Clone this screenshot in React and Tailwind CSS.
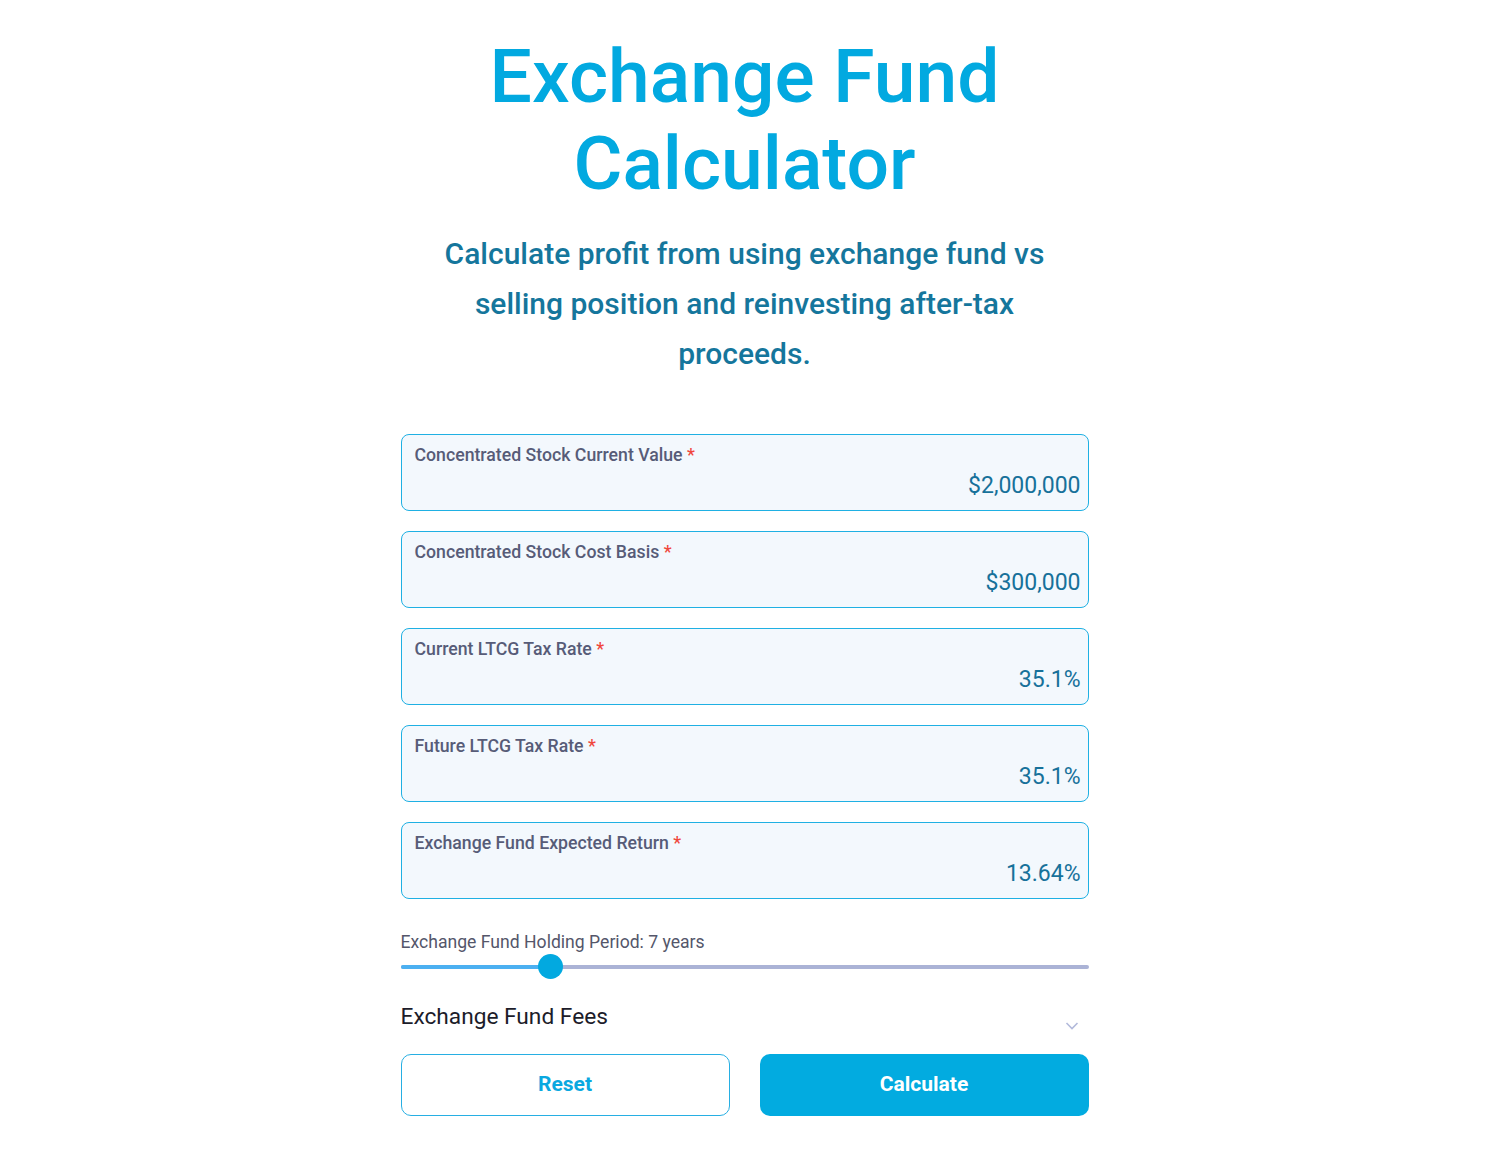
import React from "react";

const fields = [
  { label: "Concentrated Stock Current Value", value: "$2,000,000" },
  { label: "Concentrated Stock Cost Basis", value: "$300,000" },
  { label: "Current LTCG Tax Rate", value: "35.1%" },
  { label: "Future LTCG Tax Rate", value: "35.1%" },
  { label: "Exchange Fund Expected Return", value: "13.64%" },
];

function Field({ label, value }) {
  return (
    <div className="h-[77px] rounded-[8px] border border-[#1fb0e3] bg-[#f3f8fd] pl-[13px] pr-[7px] pt-[10px]">
      <div className="text-[17.7px] leading-[20px] font-medium text-[#575c78]">
        {label} <span className="text-[#f0473c]">*</span>
      </div>
      <div className="mt-[7px] text-right text-[23px] leading-[27px] text-[#17719a]">{value}</div>
    </div>
  );
}

export default function App() {
  return (
    <div className="min-h-[1165px] bg-white pr-[17px]" style={{ fontFamily: "Roboto, 'Noto Sans', sans-serif" }}>
      <div className="flex flex-col items-center pt-[33px]">
        <h1 className="text-center text-[75px] leading-[87px] font-medium text-[#02a9e0]">
          Exchange Fund
          <br />
          Calculator
        </h1>
        <p className="mt-[22px] w-[655px] text-center text-[30px] leading-[50px] font-medium text-[#15769c]">
          Calculate profit from using exchange fund vs selling position and reinvesting after-tax proceeds.
        </p>
        <div className="mt-[55px] w-[688px]">
          <div className="flex flex-col gap-[20px]">
            {fields.map((f) => (
              <Field key={f.label} {...f} />
            ))}
          </div>
          <div className="mt-[31px] text-[17.6px] leading-[24px] text-[#54566a]">
            Exchange Fund Holding Period: 7 years
          </div>
          <div className="relative mt-[0px] h-[26px]">
            <div className="absolute left-0 right-0 top-[11px] h-[4px] rounded-full bg-[#abb3d6]" />
            <div className="absolute left-0 top-[11px] h-[4px] w-[150px] rounded-full bg-[#4cb0f1]" />
            <div className="absolute left-[137px] top-0 h-[25px] w-[25px] rounded-full bg-[#02a9e0]" />
          </div>
          <div className="mt-[23px] flex items-start justify-between">
            <div className="text-[22.7px] leading-[28px] text-[#1c1c2a]">Exchange Fund Fees</div>
            <svg className="mr-[10px] mt-[18px]" width="14" height="10" viewBox="0 0 14 10" fill="none">
              <path d="M1.5 2 L7 7.5 L12.5 2" stroke="#b3badb" strokeWidth="1.6" />
            </svg>
          </div>
          <div className="mt-[23px] grid grid-cols-2 gap-[30px]">
            <button className="h-[62px] rounded-[10px] border border-[#27afe3] bg-white text-[21px] font-bold text-[#0aa8e0]">
              Reset
            </button>
            <button className="h-[62px] rounded-[10px] bg-[#02abe0] text-[21px] font-bold text-white">
              Calculate
            </button>
          </div>
        </div>
      </div>
    </div>
  );
}
